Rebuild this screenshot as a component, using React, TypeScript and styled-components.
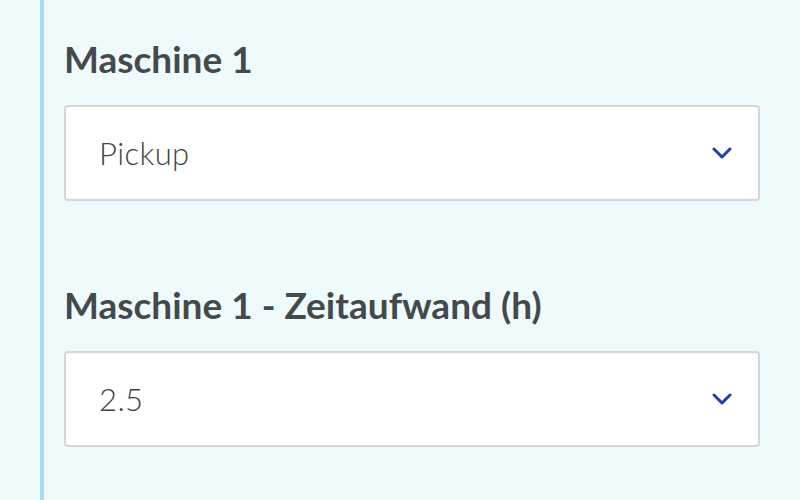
import React from "react";
import styled, { createGlobalStyle } from "styled-components";

const GlobalStyle = createGlobalStyle`
  html, body {
    margin: 0;
    padding: 0;
    background: #effafd;
    font-family: Lato, "Open Sans", sans-serif;
  }
`;

const Page = styled.div`
  height: 500px;
  padding-left: 40px;
  box-sizing: border-box;
  overflow: hidden;
`;

const Panel = styled.div`
  height: 100%;
  border-left: 4px solid #a7dcee;
  padding: 37px 40px 0 20px;
  display: flex;
  flex-direction: column;
  gap: 82px;
`;

const Field = styled.div`
  display: flex;
  flex-direction: column;
  gap: 24px;
`;

const Label = styled.label`
  font-size: 37px;
  font-weight: 700;
  color: #45494c;
  line-height: 44px;
`;

const Select = styled.div`
  height: 96px;
  box-sizing: border-box;
  background: #fff;
  border: 2px solid #d3d6d8;
  border-radius: 4px;
  display: flex;
  align-items: center;
  justify-content: space-between;
  padding: 0 26px 0 33px;
`;

const Value = styled.span`
  font-size: 31px;
  font-weight: 300;
  color: #3f4346;
  letter-spacing: 0.4px;
`;

const Chevron = () => (
  <svg width="20" height="12" viewBox="0 0 20 12">
    <path d="M2 2 L10 10 L18 2" fill="none" stroke="#1b3fae" strokeWidth="3" strokeLinecap="round" strokeLinejoin="round" />
  </svg>
);

const fields = [
  { label: "Maschine 1", value: "Pickup" },
  { label: "Maschine 1 - Zeitaufwand (h)", value: "2.5" },
];

export default function App() {
  return (
    <>
      <GlobalStyle />
      <Page>
        <Panel>
          {fields.map((f) => (
            <Field key={f.label}>
              <Label>{f.label}</Label>
              <Select>
                <Value>{f.value}</Value>
                <Chevron />
              </Select>
            </Field>
          ))}
        </Panel>
      </Page>
    </>
  );
}
